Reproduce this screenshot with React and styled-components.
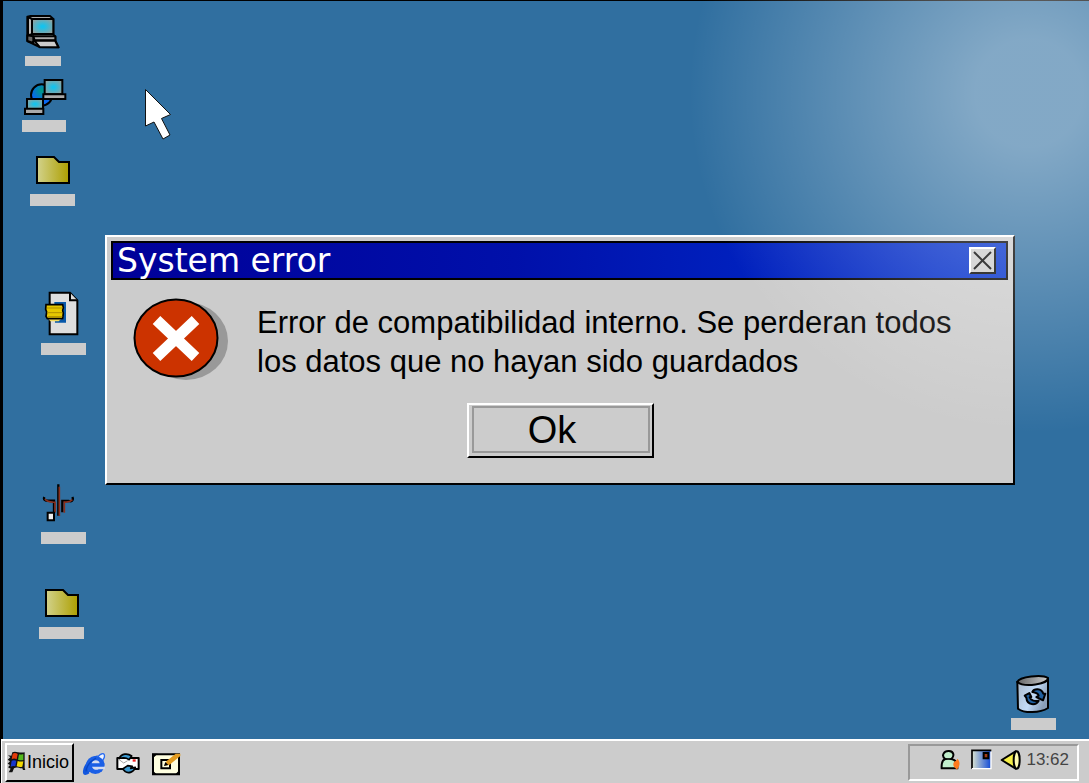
import React from 'react';
import styled, { createGlobalStyle } from 'styled-components';

const GlobalStyle = createGlobalStyle`
  * { box-sizing: border-box; }
  body { margin: 0; background: #000; font-family: "Liberation Sans", Arial, sans-serif; color: #000; }
  button { font: inherit; color: inherit; padding: 0; margin: 0; border-radius: 0; background: #ccc; cursor: default; }
  svg { display: block; flex: none; }
`;

const Screen = styled.div`
  position: relative;
  display: flex;
  flex-direction: column;
  min-height: 100vh;
  overflow: hidden;
`;

const Desktop = styled.main`
  position: relative;
  flex: 1;
  min-height: 700px;
  background: #306fa0;
  box-shadow: inset 3px 1px 0 #000;
`;

const Glow = styled.div`
  position: absolute;
  top: -247px;
  right: -280px;
  width: 680px;
  height: 680px;
  pointer-events: none;
  background: radial-gradient(circle closest-side, rgba(255,255,255,.4) 16%, rgba(255,255,255,0) 100%);
`;

const IconButton = styled.button`
  position: absolute;
  left: ${p => p.$left};
  right: ${p => p.$right};
  top: ${p => p.$top};
  bottom: ${p => p.$bottom};
  display: flex;
  flex-direction: column;
  border: 0;
  background: none;
  svg { overflow: visible; }
`;

const LabelBar = styled.span`
  width: 100%;
  height: ${p => p.$height || 12}px;
  background: #ccc;
`;

const Pointer = styled.svg`
  position: absolute;
  left: 144px;
  top: 88px;
`;

const Dialog = styled.section`
  position: absolute;
  left: 105px;
  right: 74px;
  top: 235px;
  border: 2px solid;
  border-color: #fff #000 #000 #fff;
  background: #ccc;
  padding: 4px 5px 25px 4px;
`;

const TitleBar = styled.header`
  display: flex;
  align-items: center;
  justify-content: space-between;
  height: 39px;
  padding: 0 10px 0 4px;
  border: 2px solid #000;
  background: linear-gradient(90deg, #000099, #0010aa 45%, #0020bd 70%, #0030cc);
`;

const Title = styled.h1`
  margin: 0;
  font-family: "DejaVu Sans", "Liberation Sans", sans-serif;
  font-size: 33px;
  line-height: 34px;
  font-weight: 400;
  color: #fff;
`;

const CloseButton = styled.button`
  display: grid;
  place-items: center;
  width: 27px;
  height: 27px;
  border: 2px solid;
  border-color: #fff #000 #000 #fff;
`;

const Body = styled.div`
  display: flex;
  align-items: flex-start;
  gap: 28px;
  padding: 17px 20px 0 22px;
`;

const Message = styled.p`
  margin: 0;
  padding-top: 6px;
  font-size: 31px;
  line-height: 39px;
`;

const Actions = styled.div`
  display: flex;
  justify-content: center;
  padding: 21px 0 0 2px;
`;

const OkButton = styled.button`
  width: 187px;
  height: 55px;
  padding: 1px 2px 3px 3px;
  border: 2px solid;
  border-color: #fff #000 #000 #fff;
`;

const OkFace = styled.span`
  display: block;
  height: 100%;
  padding-right: 18px;
  border: 2px solid #999;
  font-size: 38px;
  line-height: 45px;
`;

const Taskbar = styled.footer`
  display: flex;
  align-items: center;
  height: 44px;
  margin-left: 1px;
  padding: 0 10px 0 3px;
  border-top: 2px solid #fff;
  border-left: 1px solid #fff;
  background: #ccc;
`;

const StartButton = styled.button`
  display: flex;
  align-items: center;
  gap: 1px;
  width: 69px;
  height: 39px;
  border: 2px solid;
  border-color: #fff #000 #000 #fff;
  font-size: 18px;
  white-space: nowrap;
`;

const QuickLaunch = styled.nav`
  display: flex;
  align-items: center;
  gap: 10px;
  margin-left: 8px;
  padding-top: 4px;
`;

const QuickButton = styled.button`
  border: 0;
`;

const Tray = styled.div`
  display: flex;
  align-items: center;
  justify-content: flex-end;
  gap: 4px;
  width: 171px;
  height: 37px;
  margin-left: auto;
  padding: 0 8px 4px 0;
  border: 2px solid;
  border-color: #999 #fff #fff #999;
`;

const TrayIcons = styled.div`
  display: flex;
  gap: 8px;
`;

const Clock = styled.time`
  font-size: 17px;
  line-height: 20px;
  color: #444;
`;

function DesktopIcon({ name, view, width, height, bar, children, ...place }) {
  return (
    <IconButton type="button" aria-label={name} $left={place.left} $right={place.right} $top={place.top} $bottom={place.bottom}>
      <svg width={width} height={height} viewBox={view}>{children}</svg>
      <LabelBar $height={bar} />
    </IconButton>
  );
}

function Folder({ id }) {
  return (
    <g>
      <defs>
        <linearGradient id={id}>
          <stop offset="0" stopColor="#d2d28c" />
          <stop offset="1" stopColor="#ad9f00" />
        </linearGradient>
      </defs>
      <path d="M7 7H24L29 12H39V33H7Z" fill={`url(#${id})`} stroke="#000" strokeWidth="2" />
    </g>
  );
}

export default function App() {
  return (
    <>
      <GlobalStyle />
      <Screen>
        <Desktop>
          <DesktopIcon name="Computer" left="25px" top="12px" width={36} height={44} bar={10} view="75 36 108 132">
            <defs>
              <radialGradient id="screen" cx=".5" cy=".5" r=".6">
                <stop offset=".1" stopColor="#14c3ee" />
                <stop offset="1" stopColor="#96a09c" />
              </radialGradient>
            </defs>
            <g stroke="#000" strokeWidth="6" strokeLinejoin="round">
              <path d="M82 50L92 48H150L160 57V103L166 110V121L176 142L119 141L82 123Z" fill="#aaa" />
              <path d="M82 106L100 109V129L82 123Z" fill="#666" />
              <path d="M84 51L96 57V103L84 106Z" fill="#bbb" />
              <path d="M96 57H160V102H96Z" fill="url(#screen)" />
              <path d="M100 109H166V121H104Z" fill="#aaa" />
              <path d="M103 122H165L175 142H120Z" fill="#ccc" />
            </g>
          </DesktopIcon>

          <DesktopIcon name="Network" left="22px" top="76px" width={44} height={44} view="66 228 132 132">
            <defs>
              <radialGradient id="globe" cx=".5" cy=".3" r=".65">
                <stop offset="0" stopColor="#009b80" />
                <stop offset=".75" stopColor="#0868f0" />
              </radialGradient>
            </defs>
            <g stroke="#000" strokeWidth="6">
              <circle cx="125" cy="285" r="32" fill="url(#globe)" />
              <path d="M134 240H187V283H134Z" fill="url(#screen)" />
              <path d="M130 283H196V297H130Z" fill="#aaa" />
              <path d="M81 297H129V328H81Z" fill="url(#screen)" />
              <path d="M75 326H130V342H75Z" fill="#aaa" />
            </g>
          </DesktopIcon>

          <DesktopIcon name="Folder" left="30px" top="150px" width={45} height={44} view="0 0 45 44">
            <Folder id="folderTop" />
          </DesktopIcon>

          <DesktopIcon name="Document" left="41px" top="288px" width={45} height={55} view="123 24 135 165">
            <path d="M149 38H210L232 61V163H149Z" fill="#dedede" stroke="#000" strokeWidth="6" />
            <path d="M210 38V61H232" fill="#ddd" stroke="#000" strokeWidth="6" />
            <path d="M163 66H198V128H165Z" fill="#0758aa" />
            <path d="M166 75H190V119H166Z" fill="#397bbb" />
            <path d="M145 116H184L176 124H151Z" fill="#f4dc62" />
            <path d="M138 74H188L190 83L188 91L190 100L188 116H142L138 109L140 96L137 88Z" fill="#e6c800" stroke="#000" strokeWidth="5" />
            <path d="M141 84H187M141 98H187M143 110H187" stroke="#b08f00" strokeWidth="3" />
          </DesktopIcon>

          <DesktopIcon name="Shortcut" left="41px" top="480px" width={45} height={52} view="123 30 135 156">
            <g fill="none" stroke="#000" strokeWidth="7">
              <path d="M175 43V137M133 81C129 90 137 93 146 92H162V126M217 81C222 92 214 95 207 93H187V127" />
              <path d="M178 50V138M135 87C142 97 152 96 165 97V128M217 89C210 97 201 97 193 96V128" stroke="#87301f" strokeWidth="5" />
            </g>
            <path d="M143 128H162V151H143Z" fill="#eee" stroke="#000" strokeWidth="6" />
          </DesktopIcon>

          <DesktopIcon name="Files" left="39px" top="583px" width={45} height={44} view="0 0 45 44">
            <Folder id="folderBottom" />
          </DesktopIcon>

          <DesktopIcon name="Recycle bin" right="33px" bottom="9px" width={45} height={46} view="363 36 135 138">
            <defs>
              <linearGradient id="bin" x2="1" y2=".5">
                <stop offset="0" stopColor="#a9b6c5" />
                <stop offset=".6" stopColor="#c3dcf8" />
                <stop offset="1" stopColor="#8a9fb8" />
              </linearGradient>
              <linearGradient id="rim"><stop stopColor="#666" /><stop offset="1" stopColor="#ccc" /></linearGradient>
            </defs>
            <g stroke="#000" strokeWidth="6">
              <path d="M382 66L384 146C402 160 450 160 474 144V56Z" fill="url(#bin)" />
              <path d="M382 66C388 50 456 42 474 54C475 72 404 84 382 66Z" fill="url(#rim)" />
            </g>
            <g fill="#1f5f9f" stroke="#000" strokeWidth="6" strokeLinejoin="round">
              <path d="M427 96C432 85 454 84 460 101L466 101L459 121L439 111L446 107C444 98 436 98 427 96Z" />
              <path d="M404 107L418 99L424 111L419 112C422 122 436 125 446 122C438 137 411 137 409 113Z" />
            </g>
          </DesktopIcon>

          <Pointer width="28" height="52" viewBox="0 0 28 52" aria-hidden="true">
            <path d="M1.500 1.500V38L10 34L19 51L26 47L17.500 30.500L26.500 26.500Z" fill="#fff" stroke="#111" />
          </Pointer>

          <Dialog role="alertdialog" aria-labelledby="dialog-title" aria-describedby="dialog-message">
            <TitleBar>
              <Title id="dialog-title">System error</Title>
              <CloseButton type="button" aria-label="Close">
                <svg width="19" height="19" viewBox="0 0 19 19"><path d="M1 1L18 18M18 1L1 18" stroke="#000" strokeWidth="2" /></svg>
              </CloseButton>
            </TitleBar>
            <Body>
              <svg width="96" height="85" viewBox="0 0 96 85" aria-hidden="true">
                <ellipse cx="53" cy="44" rx="42" ry="39" fill="#999" />
                <ellipse cx="43" cy="41" rx="41.500" ry="38.500" fill="#cc3300" stroke="#000" strokeWidth="2" />
                <path d="M23.500 23L62.500 60M62.500 23L23.500 60" stroke="#fff" strokeWidth="11" />
              </svg>
              <Message id="dialog-message">
                Error de compatibilidad interno. Se perderan todos<br />
                los datos que no hayan sido guardados
              </Message>
            </Body>
            <Actions>
              <OkButton type="button"><OkFace>Ok</OkFace></OkButton>
            </Actions>
          </Dialog>
        </Desktop>

        <Taskbar>
          <StartButton type="button">
            <svg width="19" height="22" viewBox="22 68 57 66" aria-hidden="true">
              <path d="M38 72C48 66 56 75 75 72V119L77 125H70L68 120C55 120 52 115 43 120L38 132H27L33 121L25 117L31 110L24 106L31 99L24 94L32 87L25 81L35 82Z" fill="#111" />
              <path d="M39 76C45 73 49 74 54 77L51 93C45 90 41 90 36 93Z" fill="#e43b0b" />
              <path d="M58 78Q64 80 71 77V95Q63 97 55 94Z" fill="#55b91c" />
              <path d="M36 97Q43 94 50 97L47 114Q41 111 33 115Z" fill="#1637cd" />
              <path d="M54 98Q62 101 71 99L68 115Q60 117 51 114Z" fill="#f3d900" />
            </svg>
            Inicio
          </StartButton>
          <QuickLaunch aria-label="Quick launch">
            <QuickButton type="button" aria-label="Browser">
              <svg width="24" height="24" viewBox="244 66 72 72">
                <path d="M290 82C302 68 314 67 311 82L306 92" fill="#eef4ff" stroke="#2a6cf0" strokeWidth="4" />
                <path d="M292 76C270 80 251 100 247 122C245 136 254 138 266 130L262 112Z" fill="#1257de" />
                <ellipse cx="284" cy="105" rx="28" ry="27" fill="#1a5fe6" />
                <path d="M273 100C275 88 296 88 297 100Z" fill="#d4dcf0" />
                <path d="M274 110H313V118H294C286 122 276 118 274 110Z" fill="#d4dcf0" />
                <path d="M256 124C258 106 272 92 286 84" fill="none" stroke="#0847c4" strokeWidth="4" />
              </svg>
            </QuickButton>
            <QuickButton type="button" aria-label="Mail">
              <svg width="24" height="24" viewBox="343 68 72 72">
                <path d="M347 86H411V119H347Z" fill="#fff" stroke="#000" strokeWidth="6" strokeLinejoin="round" />
                <path d="M350 89L366 101L378 94" fill="none" stroke="#777" strokeWidth="2" />
                <path d="M353 87C359 72 378 71 390 80L382 91C374 84 364 84 353 87Z" fill="#3b98cf" stroke="#000" strokeWidth="5" strokeLinejoin="round" />
                <path d="M363 119L378 109L392 111L387 117L401 114C397 129 380 133 371 127Z" fill="#3b98cf" stroke="#000" strokeWidth="5" strokeLinejoin="round" />
                <path d="M393 90H402V97H393Z" fill="#e22" />
              </svg>
            </QuickButton>
            <QuickButton type="button" aria-label="Notes">
              <svg width="32" height="24" viewBox="447 65 96 72">
                <path d="M456 72H534V132H456Z" fill="#ffffe0" stroke="#000" strokeWidth="6" />
                <path d="M454 70H470L454 85ZM535 133H522L535 119ZM454 133V119L468 133Z" fill="#000" />
                <path d="M481 89H507V114H481Z" fill="#ffffe0" stroke="#000" strokeWidth="6" />
                <path d="M490 106L497 92L524 70L538 70V77L506 103Z" fill="#e39b20" />
                <path d="M489 107L493 95L502 104Z" fill="#000" />
              </svg>
            </QuickButton>
          </QuickLaunch>
          <Tray>
            <TrayIcons>
              <svg width="22" height="22" viewBox="153 270 66 66" aria-hidden="true">
                <path d="M169 300C155 290 165 275 180 276C195 277 197 291 187 300C202 303 206 312 205 328H158C157 311 159 303 169 300Z" fill="#c0edcb" stroke="#000" strokeWidth="6" />
                <path d="M169 300H188" stroke="#000" strokeWidth="5" />
                <path d="M205 299C202 309 194 304 193 315C192 324 202 328 203 332C213 323 215 307 205 299Z" fill="#ff7a1c" />
              </svg>
              <svg width="22" height="22" viewBox="240 269 66 66" aria-hidden="true">
                <defs>
                  <linearGradient id="panel"><stop stopColor="#dce4d0" /><stop offset="1" stopColor="#124bd7" /></linearGradient>
                </defs>
                <path d="M246 275H302V327H246Z" fill="url(#panel)" />
                <path d="M246 328V273H304" fill="none" stroke="#000" strokeWidth="5" />
                <path d="M246 328H303V277" fill="none" stroke="#fff" strokeWidth="4" />
                <path d="M281 281H295V297H281Z" fill="#a23b18" stroke="#000" strokeWidth="6" />
              </svg>
              <svg width="22" height="22" viewBox="330 269 66 66" aria-hidden="true">
                <path d="M335 302L377 276V328Z" fill="#f5ee46" stroke="#000" strokeWidth="6" strokeLinejoin="round" />
                <ellipse cx="380" cy="302" rx="9" ry="26" fill="#fffcb0" stroke="#000" strokeWidth="6" />
              </svg>
            </TrayIcons>
            <Clock>13:62</Clock>
          </Tray>
        </Taskbar>
        <Glow />
      </Screen>
    </>
  );
}
